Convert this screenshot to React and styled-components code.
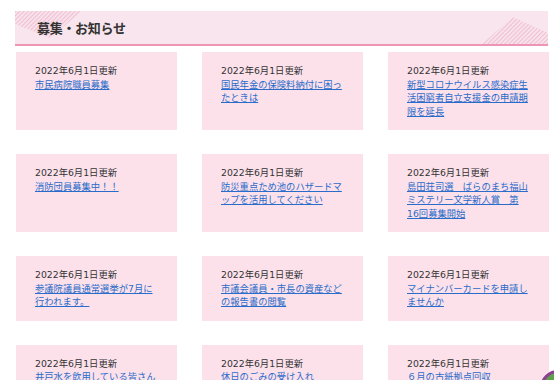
import React from 'react';
import styled, { createGlobalStyle } from 'styled-components';

const notices = [
  { date: '2022年6月1日更新', title: '市民病院職員募集' },
  { date: '2022年6月1日更新', title: '国民年金の保険料納付に困ったときは' },
  { date: '2022年6月1日更新', title: '新型コロナウイルス感染症生活困窮者自立支援金の申請期限を延長' },
  { date: '2022年6月1日更新', title: '消防団員募集中！！' },
  { date: '2022年6月1日更新', title: '防災重点ため池のハザードマップを活用してください' },
  { date: '2022年6月1日更新', title: '島田荘司選　ばらのまち福山ミステリー文学新人賞　第16回募集開始' },
  { date: '2022年6月1日更新', title: '参議院議員通常選挙が7月に行われます。' },
  { date: '2022年6月1日更新', title: '市議会議員・市長の資産などの報告書の閲覧' },
  { date: '2022年6月1日更新', title: 'マイナンバーカードを申請しませんか' },
  { date: '2022年6月1日更新', title: '井戸水を飲用している皆さん' },
  { date: '2022年6月1日更新', title: '休日のごみの受け入れ' },
  { date: '2022年6月1日更新', title: '６月の古紙拠点回収' },
];

function App() {
  return (
    <>
      <GlobalStyle />
      <Page>
        <Header>
          <Hatch viewBox="0 0 533 33" preserveAspectRatio="none">
            <defs>
              <pattern id="stripes" width="3" height="3" patternUnits="userSpaceOnUse" patternTransform="rotate(45)">
                <rect width="1.2" height="3" fill="#f0bfd1" />
              </pattern>
            </defs>
            <polygon points="0,0 67,0 35,27 0,13" fill="url(#stripes)" />
            <polygon points="467,33 498,6 533,22 533,33" fill="url(#stripes)" />
          </Hatch>
          <Title>募集・お知らせ</Title>
        </Header>
        <Grid>
          {notices.map((n, i) => (
            <Card key={i}>
              <DateLine>{n.date}</DateLine>
              <Link href="#">{n.title}</Link>
            </Card>
          ))}
        </Grid>
      </Page>
      <PageTop />
    </>
  );
}

export default App;

const GlobalStyle = createGlobalStyle`
  html, body {
    margin: 0;
    background: #fff;
    overflow: hidden;
  }
  body {
    font-family: "DejaVu Sans", "Noto Sans CJK JP", sans-serif;
  }
`;

const Page = styled.div`
  width: 533px;
  padding: 11px 0 0 15px;
`;

const Header = styled.div`
  position: relative;
  height: 33px;
  background: #f8e5ed;
  border-bottom: 2px solid #ee94b4;
  display: flex;
  align-items: center;
  padding-left: 22px;
`;

const Hatch = styled.svg`
  position: absolute;
  left: 0;
  top: 0;
  width: 100%;
  height: 100%;
`;

const Title = styled.h2`
  position: relative;
  margin: 0;
  font-family: "Noto Sans CJK JP", sans-serif;
  font-size: 13px;
  font-weight: 700;
  color: #333;
  letter-spacing: -0.3px;
`;

const Grid = styled.div`
  display: grid;
  grid-template-columns: repeat(3, 161px);
  column-gap: 25px;
  row-gap: 24px;
  margin-top: 6px;
  padding-left: 1px;
`;

const Card = styled.div`
  background: #fce1eb;
  padding: 12px 20px 12px 19px;
  font-size: 9.3px;
  line-height: 13.5px;
`;

const DateLine = styled.div`
  color: #333;
`;

const Link = styled.a`
  display: block;
  width: 122px;
  color: #2a6cc9;
  text-decoration: underline;
`;

const PageTop = styled.div`
  position: fixed;
  right: -22px;
  bottom: -26px;
  width: 30px;
  height: 30px;
  border-radius: 50%;
  border: 3px solid #8d3f92;
  background: #5fa14a;
`;
